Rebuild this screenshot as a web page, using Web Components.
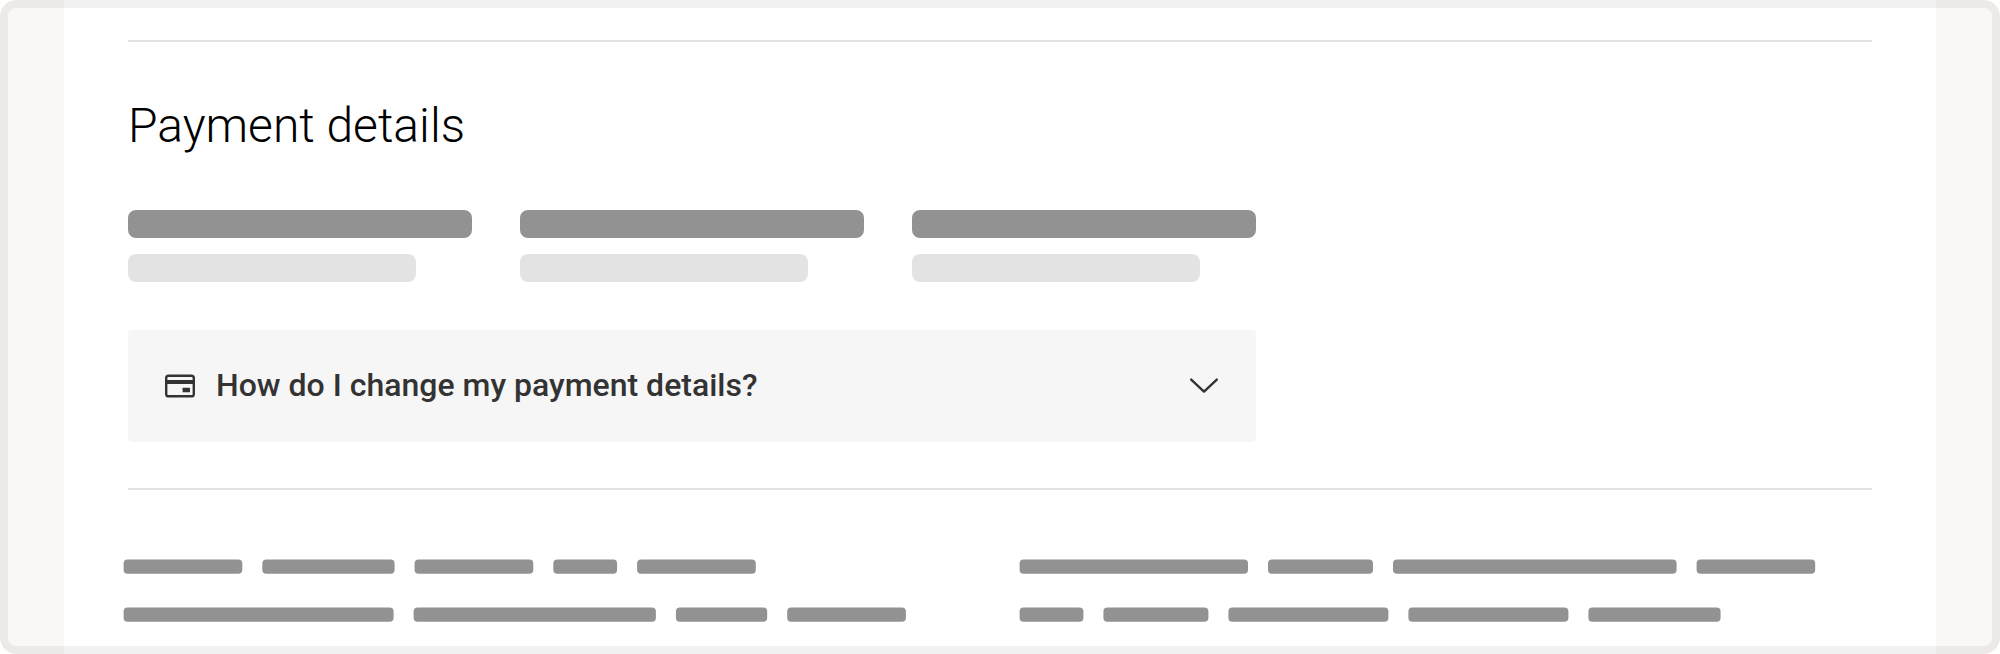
<!DOCTYPE html>
<html lang="en">
<head>
<meta charset="utf-8">
<title>Payment details</title>
<style>
html,body{margin:0;height:100%;background:#fff;overflow:hidden}
body{font-family:Roboto,"Liberation Sans",sans-serif}
</style>
</head>
<body>
<page-frame>
  <page-rule></page-rule>
  <payment-section>
    <span slot="title">Payment details</span>
    <field-skeleton></field-skeleton>
    <field-skeleton></field-skeleton>
    <field-skeleton></field-skeleton>
    <help-accordion slot="help">How do I change my payment details?</help-accordion>
  </payment-section>
  <page-rule></page-rule>
  <text-columns>
    <text-skeleton offset="0.6" rows="118.7,132.3,118.7,63.8,118.7|270,242.3,91.3,118.7"></text-skeleton>
    <text-skeleton offset="0.6" rows="228.4,105,283.6,118.6|63.8,105,160,160,132.2"></text-skeleton>
  </text-columns>
</page-frame>
<script>
const define = (name, html, setup) => customElements.define(name, class extends HTMLElement {
  constructor() {
    super();
    this.attachShadow({ mode: 'open' }).innerHTML = html;
  }
  connectedCallback() { if (setup) setup(this); }
});

define('page-frame', `
<style>
:host{display:block;position:relative;box-sizing:border-box;height:654px;padding:0 64px;background:#fbf7f4;border-radius:16px;overflow:hidden}
main{box-sizing:border-box;height:100%;background:#fff;padding:40px 64px 0}
.edge{position:absolute;inset:0;border:8px solid rgba(0,0,0,.056);border-radius:16px;pointer-events:none}
</style>
<main><slot></slot></main><div class="edge"></div>`);

define('page-rule', `<style>:host{display:block;height:2px;background:#e4e4e4}</style>`);

define('payment-section', `
<style>
:host{display:block;padding:56px 0 46px}
h2{margin:0;font-weight:300;font-size:48px;line-height:56px;color:#000}
.fields{display:flex;gap:48px;margin:56px 0 48px}
</style>
<h2><slot name="title"></slot></h2>
<div class="fields"><slot></slot></div>
<slot name="help"></slot>`);

define('field-skeleton', `
<style>
:host{display:flex;flex-direction:column;gap:16px;width:344px}
div{height:28px;border-radius:8px;background:#929292}
div+div{width:288px;background:#e3e3e3}
</style><div></div><div></div>`);

define('help-accordion', `
<style>
:host{display:flex;align-items:center;box-sizing:border-box;width:1128px;height:112px;padding:0 36px;border-radius:4px;background:#f6f6f6;color:#333;font-weight:500;font-size:32px;line-height:40px}
svg{display:block;flex:none}
span{flex:1;margin-left:20px;position:relative;top:-1px}
</style>
<svg width="32" height="32" viewBox="0 0 32 32" fill="none">
  <rect x="2.2" y="5.7" width="27.6" height="20.6" rx="2.4" stroke="#333" stroke-width="2.4"/>
  <path d="M2 10h28v4H2z" fill="#333"/>
  <rect x="18.6" y="17.7" width="7.4" height="4.6" rx=".6" fill="#333"/>
</svg>
<span><slot></slot></span>
<svg width="32" height="32" viewBox="0 0 32 32" fill="none">
  <path d="M3.2 9.6 16 21.6 28.8 9.6" stroke="#333" stroke-width="2.4" stroke-linecap="round" stroke-linejoin="round"/>
</svg>`);

define('text-columns', `
<style>:host{display:grid;grid-template-columns:896px 1fr;margin:69px 0 0 -5px}</style><slot></slot>`);

define('text-skeleton', `
<style>
:host{display:flex;flex-direction:column;gap:33px}
svg{display:block;fill:#929292}
</style>`, el => {
  for (const row of el.getAttribute('rows').split('|')) {
    let x = +el.getAttribute('offset'), rects = '';
    for (const w of row.split(',').map(Number)) {
      rects += `<rect x="${x.toFixed(2)}" y=".4" width="${w}" height="14.4" rx="4"/>`;
      x += w + 20;
    }
    el.shadowRoot.innerHTML += `<svg width="840" height="15">${rects}</svg>`;
  }
});
</script>
</body>
</html>
